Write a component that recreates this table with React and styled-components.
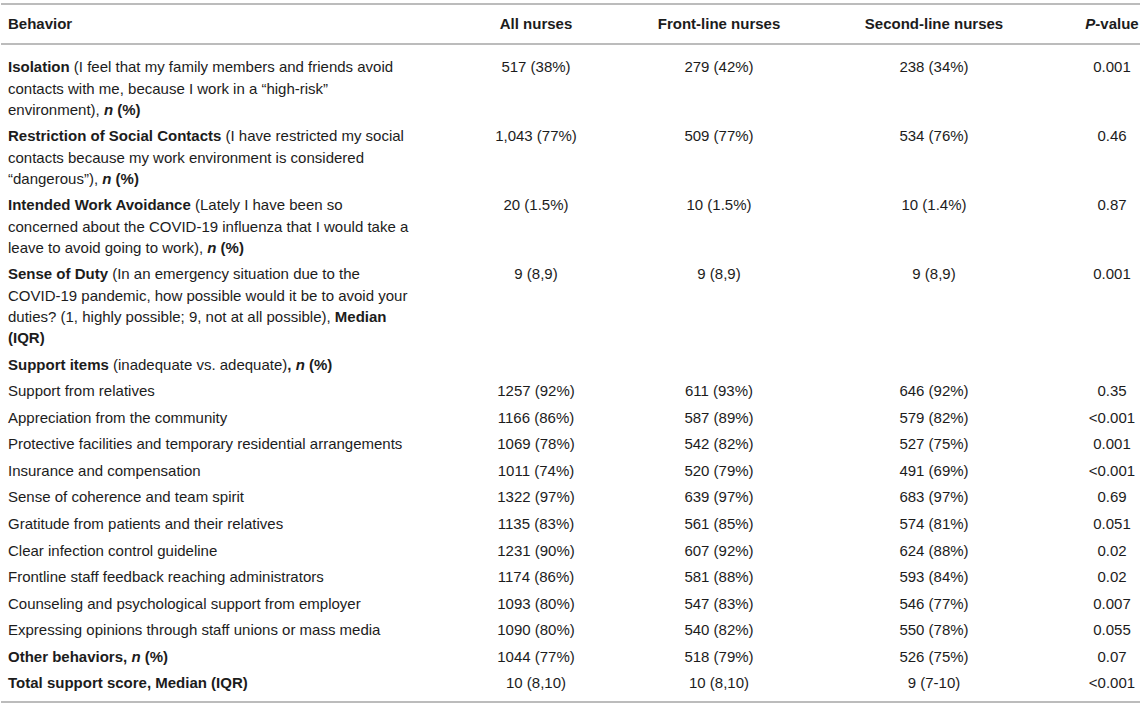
import React from "react";
import styled, { createGlobalStyle } from "styled-components";

const Global = createGlobalStyle`
  html, body { margin: 0; padding: 0; background: #ffffff; }
  body {
    font-family: "Liberation Sans", Arial, Helvetica, sans-serif;
    color: #1c1c1c;
  }
`;

const Page = styled.div`
  padding-top: 3px;
  padding-left: 1px;
  width: 1142px;
`;

const Table = styled.div`
  width: 1139px;
  border-top: 2px solid #bcbcbc;
  border-bottom: 2px solid #bcbcbc;
  font-size: 15px;
  line-height: 21.2px;
`;

const Head = styled.div`
  border-bottom: 2px solid #bcbcbc;
  padding: 8px 0 9px;
`;

const Body = styled.div`
  padding: 8.5px 0 5px;
`;

const Row = styled.div`
  display: grid;
  grid-template-columns: 417px 236px 130px 300px 56px;
  align-items: start;
  padding: ${(p) => (p.$head ? "0" : "2.7px 0")};
  font-weight: ${(p) => (p.$head ? 700 : 400)};
`;

const Label = styled.div`
  padding-left: 7px;
  text-align: left;
  white-space: nowrap;
`;

const Cell = styled.div`
  text-align: center;
  white-space: nowrap;
`;

const B = styled.b`
  font-weight: 700;
`;

const I = styled.i`
  font-style: italic;
`;

const NP = () => (
  <B>
    <I>n</I> (%)
  </B>
);

const rows = [
  {
    label: (
      <>
        <B>Isolation</B> (I feel that my family members and friends avoid
        <br />
        contacts with me, because I work in a “high-risk”
        <br />
        environment), <NP />
      </>
    ),
    v: ["517 (38%)", "279 (42%)", "238 (34%)", "0.001"],
  },
  {
    label: (
      <>
        <B>Restriction of Social Contacts</B> (I have restricted my social
        <br />
        contacts because my work environment is considered
        <br />
        “dangerous”), <NP />
      </>
    ),
    v: ["1,043 (77%)", "509 (77%)", "534 (76%)", "0.46"],
  },
  {
    label: (
      <>
        <B>Intended Work Avoidance</B> (Lately I have been so
        <br />
        concerned about the COVID-19 influenza that I would take a
        <br />
        leave to avoid going to work), <NP />
      </>
    ),
    v: ["20 (1.5%)", "10 (1.5%)", "10 (1.4%)", "0.87"],
  },
  {
    label: (
      <>
        <B>Sense of Duty</B> (In an emergency situation due to the
        <br />
        COVID-19 pandemic, how possible would it be to avoid your
        <br />
        duties? (1, highly possible; 9, not at all possible), <B>Median</B>
        <br />
        <B>(IQR)</B>
      </>
    ),
    v: ["9 (8,9)", "9 (8,9)", "9 (8,9)", "0.001"],
  },
  {
    label: (
      <>
        <B>Support items</B> (inadequate vs. adequate)<B>, </B>
        <NP />
      </>
    ),
    v: ["", "", "", ""],
  },
  { label: "Support from relatives", v: ["1257 (92%)", "611 (93%)", "646 (92%)", "0.35"] },
  { label: "Appreciation from the community", v: ["1166 (86%)", "587 (89%)", "579 (82%)", "<0.001"] },
  {
    label: "Protective facilities and temporary residential arrangements",
    v: ["1069 (78%)", "542 (82%)", "527 (75%)", "0.001"],
  },
  { label: "Insurance and compensation", v: ["1011 (74%)", "520 (79%)", "491 (69%)", "<0.001"] },
  { label: "Sense of coherence and team spirit", v: ["1322 (97%)", "639 (97%)", "683 (97%)", "0.69"] },
  { label: "Gratitude from patients and their relatives", v: ["1135 (83%)", "561 (85%)", "574 (81%)", "0.051"] },
  { label: "Clear infection control guideline", v: ["1231 (90%)", "607 (92%)", "624 (88%)", "0.02"] },
  { label: "Frontline staff feedback reaching administrators", v: ["1174 (86%)", "581 (88%)", "593 (84%)", "0.02"] },
  { label: "Counseling and psychological support from employer", v: ["1093 (80%)", "547 (83%)", "546 (77%)", "0.007"] },
  { label: "Expressing opinions through staff unions or mass media", v: ["1090 (80%)", "540 (82%)", "550 (78%)", "0.055"] },
  {
    label: (
      <B>
        Other behaviors, <I>n</I> (%)
      </B>
    ),
    v: ["1044 (77%)", "518 (79%)", "526 (75%)", "0.07"],
  },
  {
    label: <B>Total support score, Median (IQR)</B>,
    v: ["10 (8,10)", "10 (8,10)", "9 (7-10)", "<0.001"],
  },
];

export default function App() {
  return (
    <Page>
      <Global />
      <Table>
        <Head>
          <Row $head>
            <Label>Behavior</Label>
            <Cell>All nurses</Cell>
            <Cell>Front-line nurses</Cell>
            <Cell>Second-line nurses</Cell>
            <Cell>
              <I>P</I>-value
            </Cell>
          </Row>
        </Head>
        <Body>
          {rows.map((r, i) => (
            <Row key={i}>
              <Label>{r.label}</Label>
              {r.v.map((x, j) => (
                <Cell key={j}>{x}</Cell>
              ))}
            </Row>
          ))}
        </Body>
      </Table>
    </Page>
  );
}
